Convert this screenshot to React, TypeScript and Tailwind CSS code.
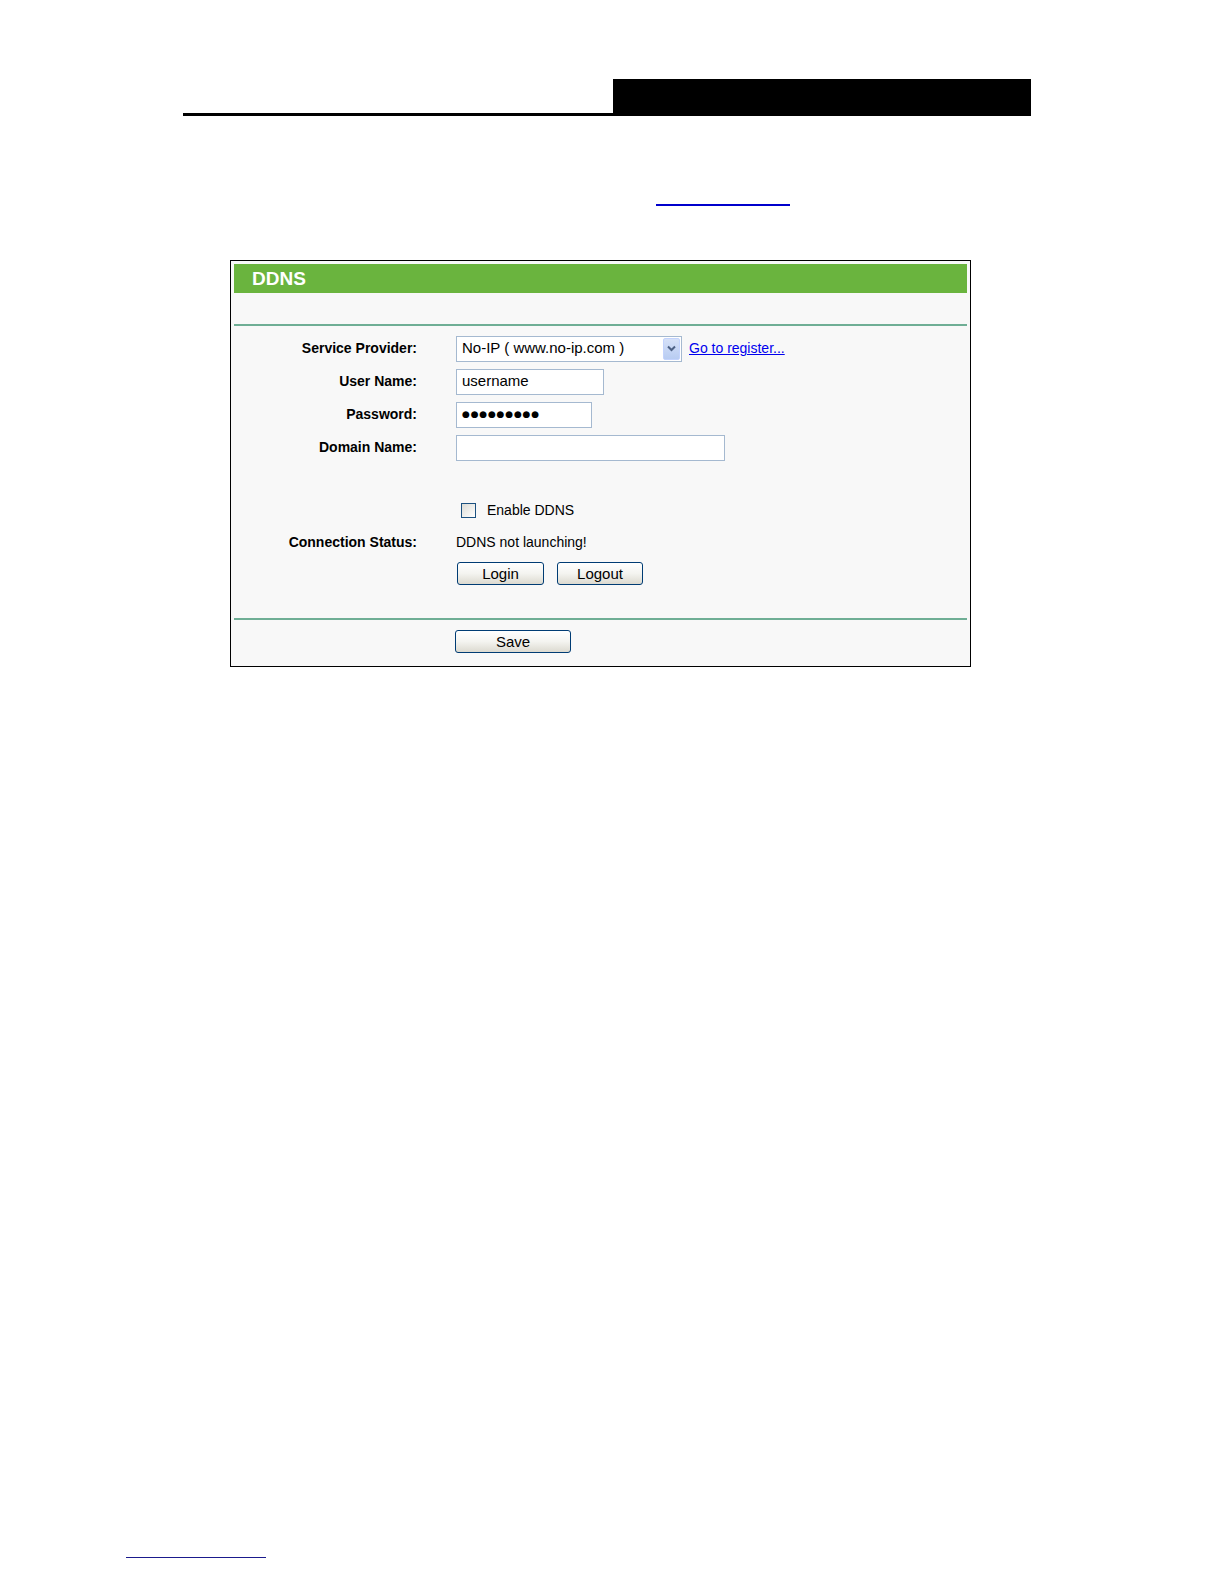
import React from 'react'

const font = { fontFamily: '"Liberation Sans", Arial, sans-serif' }

function XpButton({ label, width }: { label: string; width: string }) {
  return (
    <button
      className={`${width} h-[23px] rounded-[3px] border border-[#003c74] bg-gradient-to-b from-white via-[#f4f4f0] to-[#dcdad0] text-[15px] leading-none text-black`}
      style={font}
    >
      {label}
    </button>
  )
}

function Row({ label, children, h = 'h-[33px]' }: { label?: string; children?: React.ReactNode; h?: string }) {
  return (
    <div className={`flex items-center ${h}`}>
      <div className="w-[186px] shrink-0 text-right text-[14px] font-bold text-black">{label}</div>
      <div className="ml-[39px] flex items-center">{children}</div>
    </div>
  )
}

export default function App() {
  return (
    <div className="w-[1224px] h-[1584px] bg-white overflow-hidden" style={font}>
      {/* page header bar */}
      <div className="pt-[79px] pl-[183px]">
        <div className="flex items-end w-[848px]">
          <div className="flex-1 h-[3px] bg-black" />
          <div className="w-[418px] h-[37px] bg-black" />
        </div>
      </div>

      {/* underlined link line */}
      <div className="mt-[88px] ml-[656px] w-[134px] h-[2px] bg-[#0000cc]" />

      {/* DDNS panel */}
      <div className="mt-[54px] ml-[230px] w-[741px] h-[407px] border border-black bg-[#f8f8f8] p-[3px]">
        <div className="h-[29px] bg-[#6ab43e] flex items-center pl-[18px]">
          <span className="text-white text-[19px] font-bold leading-none">DDNS</span>
        </div>
        <div className="h-[31px]" />
        <div className="h-[2px] bg-[#6fae95]" />
        <div className="h-[6px]" />

        <div className="-ml-[3px]">
          <Row label="Service Provider:">
            <div className="w-[226px] h-[26px] border border-[#a5b9d0] bg-white flex items-center">
              <span className="flex-1 pl-[5px] text-[15px] text-black whitespace-nowrap">No-IP ( www.no-ip.com )</span>
              <div className="w-[17px] h-[22px] mr-[1px] rounded-[2px] bg-gradient-to-b from-[#d6e1f8] to-[#b8ccf2] border border-[#c3d3fd] flex items-center justify-center">
                <svg width="9" height="7" viewBox="0 0 9 7">
                  <path d="M1 1.5 L4.5 5 L8 1.5" fill="none" stroke="#4d6185" strokeWidth="2" />
                </svg>
              </div>
            </div>
            <a className="ml-[7px] text-[14px] text-[#0000ee] underline whitespace-nowrap" href="#">
              Go to register...
            </a>
          </Row>
          <Row label="User Name:">
            <div className="w-[148px] h-[26px] border border-[#a5b9d0] bg-white flex items-center pl-[5px] text-[15px] text-black">
              username
            </div>
          </Row>
          <Row label="Password:">
            <div className="w-[136px] h-[26px] border border-[#a5b9d0] bg-white flex items-center pl-[5px] text-black">
              <span style={{ fontFamily: '"DejaVu Sans", sans-serif' }} className="text-[9px] tracking-[0.8px]">●●●●●●●●●</span>
            </div>
          </Row>
          <Row label="Domain Name:">
            <div className="w-[269px] h-[26px] border border-[#a5b9d0] bg-white" />
          </Row>

          <div className="h-[30px]" />

          <Row>
            <div className="ml-[5px] w-[15px] h-[15px] border border-[#1c5180] bg-gradient-to-br from-[#dcdcd6] to-white" />
            <span className="ml-[11px] text-[14px] text-black">Enable DDNS</span>
          </Row>
          <Row label="Connection Status:" h="h-[30px]">
            <span className="text-[14px] text-black">DDNS not launching!</span>
          </Row>
          <Row>
            <div className="ml-[1px] flex gap-[13px]">
              <XpButton label="Login" width="w-[87px]" />
              <XpButton label="Logout" width="w-[86px]" />
            </div>
          </Row>
        </div>

        <div className="h-[28px]" />
        <div className="h-[2px] bg-[#6fae95]" />
        <div className="pt-[10px] pl-[221px]">
          <XpButton label="Save" width="w-[116px]" />
        </div>
      </div>

      {/* footer link line */}
      <div className="mt-[890px] ml-[126px] w-[140px] h-[1px] bg-[#1a1a8c]" />
    </div>
  )
}
